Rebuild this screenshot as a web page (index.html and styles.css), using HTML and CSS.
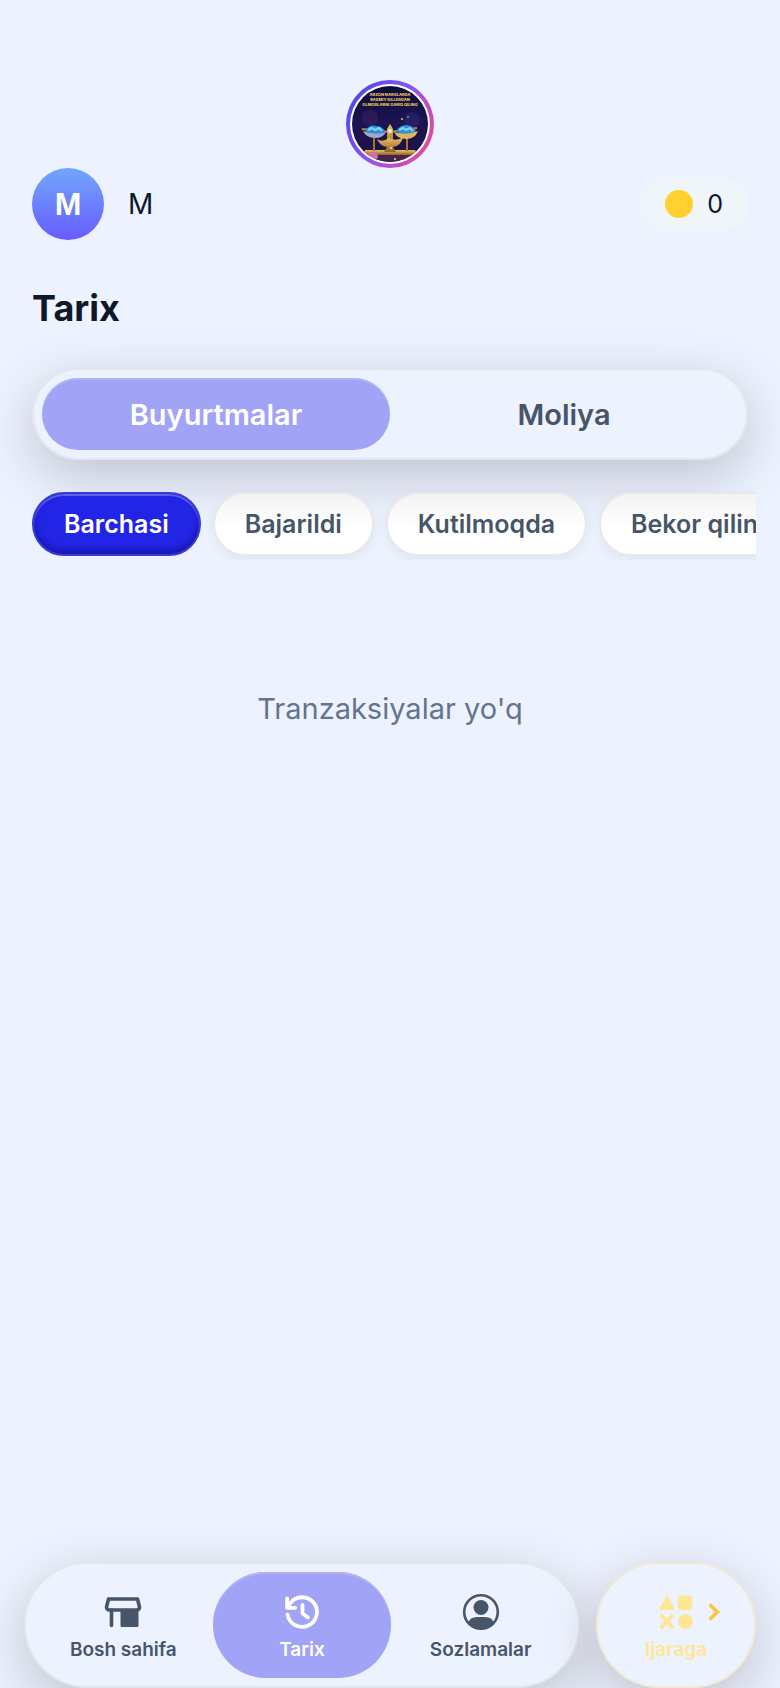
FILE: index.html
```html
<!DOCTYPE html>
<html lang="uz">
<head>
<meta charset="utf-8">
<meta name="viewport" content="width=device-width, initial-scale=1">
<title>Tarix</title>
<link rel="stylesheet" href="styles.css">
</head>
<body>
<div class="app">
  <header class="top">
    <button class="story" type="button" aria-label="Story">
      <svg class="story-art" viewBox="0 0 88 88" aria-hidden="true">
        <defs>
          <linearGradient id="ring" x1="0" y1="0.2" x2="1" y2="0.8">
            <stop offset="0" stop-color="#4f46e5"/><stop offset="0.5" stop-color="#8b55ee"/><stop offset="1" stop-color="#ec4899"/>
          </linearGradient>
          <linearGradient id="night" x1="0" y1="0" x2="0" y2="1">
            <stop offset="0" stop-color="#0a0c35"/><stop offset="0.5" stop-color="#1d1552"/><stop offset="1" stop-color="#1a0f3c"/>
          </linearGradient>
          <linearGradient id="gold" x1="0" y1="0" x2="0" y2="1">
            <stop offset="0" stop-color="#efc565"/><stop offset="1" stop-color="#936027"/>
          </linearGradient>
          <clipPath id="disc"><circle cx="44" cy="44" r="38"/></clipPath>
        </defs>
        <circle cx="44" cy="44" r="44" fill="url(#ring)"/>
        <circle cx="44" cy="44" r="40" fill="#fff"/>
        <g clip-path="url(#disc)">
          <rect width="88" height="88" fill="url(#night)"/>
          <circle cx="24" cy="38" r="8" fill="#442064" opacity=".5"/>
          <circle cx="66" cy="40" r="8" fill="#2b2474" opacity=".6"/>
          <text class="art-text" x="44" y="16">ARZON NARXLARDA</text>
          <text class="art-text" x="44" y="21">RASMIY DILLERDAN</text>
          <text class="art-text" x="44" y="26">OLMOSLARNI XARID QILING</text>
          <path d="M17 75q26-8 54 0v8H17z" fill="#44244e"/>
          <path d="M19 70h50l3 5H17z" fill="url(#gold)"/>
          <path d="M28 56v15M61 56v15" stroke="#a86f32" stroke-width="2"/>
          <path d="M16 49l28 3 27-4" fill="none" stroke="#b98743" stroke-width="2"/>
          <path d="M41 69V49l3-5 3 5v20z" fill="url(#gold)"/>
          <path d="M31 59q5 4 12-1 8 4 14-1-2 9-10 10l3 5H38l3-5q-7-1-10-8z" fill="url(#gold)"/>
          <path d="M19 51q5-7 11-5 6 0 9 5l-5 4H23zM50 51q4-6 10-6t10 6l-5 4H55z" fill="#2f8fd8"/>
          <path d="M22 50l4-2 3 2 4-2 3 3M53 50l4-2 3 2 4-2 3 3" fill="none" stroke="#79d8ff" stroke-width="2"/>
          <path d="M17 51q11 5 23 1-3 6-11 6-9 0-12-7z" fill="#a9a6c5"/>
          <path d="M48 52q12 4 24-1-3 8-12 8-9 0-12-7z" fill="#dfb45b"/>
          <path d="M20 76q7-6 11-3l1 5-9 4z" fill="#d071ae"/>
          <circle cx="44" cy="51" r="2" fill="#dcecff"/>
          <circle cx="56" cy="39" r="1" fill="#f3c36a"/><circle cx="62" cy="37" r="1" fill="#7882d4"/>
          <circle cx="49" cy="79" r="1" fill="#ffd879"/><circle cx="45" cy="68" r="1" fill="#ffe68c"/>
        </g>
      </svg>
    </button>
    <div class="profile">
      <a class="user" href="#profile"><span class="avatar">M</span><span class="name">M</span></a>
      <a class="balance" href="#balance"><span class="coin"></span>0</a>
    </div>
  </header>

  <main class="content">
    <h1 class="title">Tarix</h1>
    <div class="segments">
      <button class="segment segment-on" type="button" aria-pressed="true">Buyurtmalar</button>
      <button class="segment" type="button" aria-pressed="false">Moliya</button>
    </div>
    <div class="chips">
      <button class="chip chip-on" type="button">Barchasi</button>
      <button class="chip" type="button">Bajarildi</button>
      <button class="chip" type="button">Kutilmoqda</button>
      <button class="chip" type="button">Bekor qilingan</button>
    </div>
    <p class="empty">Tranzaksiyalar yo'q</p>
  </main>

  <nav class="dock">
    <div class="tabs">
      <a class="tab" href="#home">
        <svg class="icon" viewBox="0 0 40 40" aria-hidden="true">
          <path d="M5.500 7h29l2 8q0 3-3 3H6.500q-3 0-3-3z" fill="none" stroke="currentColor" stroke-width="3.600" stroke-linejoin="round"/>
          <path d="M8.500 18v15.500" stroke="currentColor" stroke-width="3.600" stroke-linecap="round"/>
          <path d="M17.500 18h18v15.500q0 1.500-1.500 1.500H19q-1.500 0-1.500-1.500z" fill="currentColor"/>
        </svg>
        <span>Bosh sahifa</span>
      </a>
      <a class="tab tab-on" href="#history" aria-current="page">
        <svg class="icon" viewBox="0 0 40 40" aria-hidden="true">
          <g fill="none" stroke="currentColor" stroke-width="3.800" stroke-linecap="round" stroke-linejoin="round">
            <path d="M5.500 22.500A14.800 14.800 0 1 0 8 11.500L5.500 15.500"/>
            <path d="M5.200 6.500v9.300h8M20.500 13v8.500l5.500 4"/>
          </g>
        </svg>
        <span>Tarix</span>
      </a>
      <a class="tab" href="#settings">
        <svg class="icon" viewBox="0 0 40 40" aria-hidden="true">
          <circle cx="20" cy="20" r="16.800" fill="none" stroke="currentColor" stroke-width="2.600"/>
          <circle cx="20" cy="15.500" r="7.500" fill="currentColor"/>
          <path d="M7 31q2-6 9-6h8q7 0 9 6-5 6-13 6T7 31z" fill="currentColor"/>
        </svg>
        <span>Sozlamalar</span>
      </a>
    </div>
    <a class="rent" href="#rent">
      <span class="rent-mark">
        <svg class="icon" viewBox="0 0 40 40" aria-hidden="true">
          <path d="M11 5l6.500 12h-13z" fill="currentColor" stroke="currentColor" stroke-width="2" stroke-linejoin="round"/>
          <rect x="22" y="3.500" width="14.500" height="14.500" rx="3" fill="currentColor"/>
          <path d="M6 24l10 11M16 24L6 35" stroke="currentColor" stroke-width="4" stroke-linecap="round"/>
          <circle cx="29.500" cy="29.500" r="7.500" fill="currentColor"/>
        </svg>
        <svg class="chevron" viewBox="0 0 16 20" aria-hidden="true"><path d="M3.500 2.500l8 7.500-8 7.500" fill="none" stroke="currentColor" stroke-width="3.600"/></svg>
      </span>
      <span>Ijaraga</span>
    </a>
  </nav>
</div>
</body>
</html>
```
FILE: styles.css
```css
* { box-sizing: border-box; }

body {
  margin: 0;
  background: #edf2ff;
  color: #0f172a;
  font-family: Inter, "Liberation Sans", sans-serif;
}

a { color: inherit; text-decoration: none; }
button { font: inherit; color: inherit; border: 0; cursor: pointer; }

.app {
  display: flex;
  flex-direction: column;
  min-height: 100vh;
  overflow: hidden;
}

.top { padding: 80px 32px 0; }

.story {
  display: block;
  margin: 0 auto;
  padding: 0;
  border-radius: 50%;
  background: none;
}
.story-art { display: block; width: 88px; height: 88px; }
.art-text {
  fill: #edc660;
  font-size: 4px;
  font-weight: 800;
  text-anchor: middle;
}

.profile { display: flex; align-items: center; justify-content: space-between; }
.user { display: flex; align-items: center; gap: 24px; font-size: 28px; }
.avatar {
  display: grid;
  place-items: center;
  width: 72px;
  height: 72px;
  border-radius: 50%;
  background: linear-gradient(#73a7fc, #665cff);
  color: #fff;
  font-family: "Liberation Sans", sans-serif;
  font-size: 32px;
  font-weight: 700;
}
.balance {
  display: flex;
  align-items: center;
  gap: 14px;
  height: 56px;
  padding: 0 25px;
  border-radius: 28px;
  background: #f0f5fa;
  font-size: 25px;
}
.coin { width: 28px; height: 28px; border-radius: 50%; background: #ffd02f; }

.content { flex: 1; padding: 44px 32px 0; }
.title { margin: 0; font-size: 36px; line-height: 48px; font-weight: 700; }

.segments {
  display: grid;
  grid-template-columns: 1fr 1fr;
  margin-top: 36px;
  padding: 8px;
  border: 2px solid #e2e6f1;
  border-radius: 46px;
  background: #edf2ff;
  box-shadow: 0 16px 56px rgba(0, 0, 0, 0.2);
}
.segment {
  height: 72px;
  border-radius: 36px;
  background: none;
  color: #475569;
  font-size: 29px;
  font-weight: 600;
}
.segment-on {
  background: #a0a3f6;
  color: #fff;
  box-shadow: inset 0 2px #b0b3f4;
}

.chips {
  display: flex;
  gap: 12px;
  margin: 28px -8px 0;
  padding: 4px 8px;
  overflow: hidden;
}
.chip {
  flex: none;
  height: 64px;
  padding: 0 30px;
  border: 2px solid #e7e8ec;
  border-radius: 32px;
  background: linear-gradient(#f3f3f4, #fff 60%);
  color: #475569;
  box-shadow: 0 4px 12px rgba(15, 23, 42, 0.06);
  font-size: 25px;
  font-weight: 600;
}
.chip-on {
  border-color: #393bd0;
  background: #2325e6;
  color: #fff;
  box-shadow: inset 0 2px #5c5ee8, inset 0 -4px 6px rgba(10, 10, 120, 0.5);
}

.empty {
  margin: 128px 0 0;
  color: #64748b;
  font-size: 29px;
  line-height: 42px;
  text-align: center;
}

.dock { display: flex; gap: 16px; padding: 0 24px; }
.tabs, .rent {
  height: 126px;
  border: 2px solid #e2e6f1;
  border-radius: 63px;
  background: #edf2ff;
  box-shadow: 0 16px 56px rgba(0, 0, 0, 0.2);
  font-size: 19px;
  line-height: 24px;
  font-weight: 600;
}
.tabs {
  display: grid;
  flex: 1;
  grid-template-columns: repeat(3, 1fr);
  padding: 8px;
}
.tab, .rent {
  display: flex;
  flex-direction: column;
  align-items: center;
  justify-content: center;
  gap: 6px;
  padding-top: 4px;
}
.tab { border-radius: 53px; color: #475569; }
.tab-on { background: #a0a3f6; color: #fff; box-shadow: inset 0 2px #b0b3f4; }
.icon { display: block; width: 40px; height: 40px; }

.rent { width: 160px; border-color: #f1e9d6; color: #ffe694; }
.rent-mark { position: relative; }
.chevron {
  position: absolute;
  top: 10px;
  left: 50px;
  width: 16px;
  height: 20px;
  color: #f6c63e;
}
```
